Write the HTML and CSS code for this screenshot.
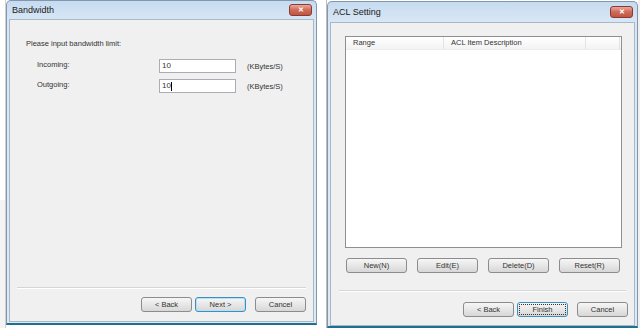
FILE: index.html
```html
<!DOCTYPE html>
<html lang="en">

<head>
    <meta charset="UTF-8">
    <title>Bandwidth / ACL Setting</title>
    <link rel="stylesheet" href="styles.css">
</head>

<body>

    <div class="behind left-edge"></div>

    <!-- Bandwidth wizard page -->
    <div class="win bw">
        <div class="titlebar">
            <span class="title">Bandwidth</span>
            <span class="close">&#x2715;</span>
        </div>
        <div class="client">
            <p class="lead">Please input bandwidth limit:</p>
            <div class="field">
                <label>Incoming:</label>
                <div class="input">10</div>
                <span class="unit">(KBytes/S)</span>
            </div>
            <div class="field">
                <label>Outgoing:</label>
                <div class="input">10<span class="caret"></span></div>
                <span class="unit">(KBytes/S)</span>
            </div>
            <div class="spacer"></div>
            <hr class="sep">
            <div class="nav">
                <button class="btn">&lt; Back</button>
                <button class="btn default">Next &gt;</button>
                <button class="btn cancel">Cancel</button>
            </div>
        </div>
    </div>

    <div class="behind gap"></div>

    <!-- ACL wizard page -->
    <div class="win acl">
        <div class="titlebar">
            <span class="title">ACL Setting</span>
            <span class="close">&#x2715;</span>
        </div>
        <div class="client">
            <div class="list">
                <div class="list-head">
                    <span class="col range">Range</span>
                    <span class="col desc">ACL Item Description</span>
                    <span class="col rest"></span>
                </div>
            </div>
            <div class="actions">
                <button class="btn">New(N)</button>
                <button class="btn">Edit(E)</button>
                <button class="btn">Delete(D)</button>
                <button class="btn">Reset(R)</button>
            </div>
            <hr class="sep">
            <div class="nav">
                <button class="btn">&lt; Back</button>
                <button class="btn focus">Finish</button>
                <button class="btn cancel">Cancel</button>
            </div>
        </div>
    </div>

    <div class="behind right-edge"></div>

</body>

</html>
```

FILE: styles.css
```css
html,
body {
    margin: 0;
    padding: 0;
    width: 640px;
    height: 328px;
    overflow: hidden;
    background: #fff;
    font-family: 'Liberation Sans', Arial, sans-serif;
    font-size: 8px;
    color: #333;
}

body {
    display: flex;
    align-items: flex-start;
}

/* Desktop bits showing between the dialogs */

.behind {
    height: 328px;
    flex: none;
}

.left-edge {
    width: 5px;
    background: linear-gradient(#fff 0, #fff 200px, #f4f4f4 200px);
    border-right: 1px solid #d0d0d0;
}

.gap {
    width: 9px;
    border-right: 1px solid #bdbdbd;
    background: #fff;
}

.right-edge {
    width: 3px;
    background: #f0f0f0;
}

/* Window frame */

.win {
    flex: none;
    display: flex;
    flex-direction: column;
    box-sizing: border-box;
    background: linear-gradient(#c6dbf0, #d9e7f5 20px, #dde9f5);
    border: 1px solid #8297ad;
    border-radius: 5px 5px 0 0;
    border-bottom: 2px solid #1f6f8f;
    padding: 0 2px 1px;
}

.bw {
    width: 311px;
    height: 325px;
}

.acl {
    width: 311px;
    height: 327px;
    margin-top: 1px;
}

.titlebar {
    height: 18px;
    display: flex;
    align-items: center;
    justify-content: space-between;
    padding: 0 2px 0 3px;
    flex: none;
}

.acl .titlebar {
    height: 20px;
}

.title {
    font-size: 9px;
    color: #1a1a1a;
}

.close {
    width: 21px;
    height: 10px;
    border: 1px solid #8a3a30;
    border-radius: 3px;
    background: linear-gradient(#e8a89c, #cf6a58 50%, #c05640);
    color: #fff;
    font-size: 7px;
    font-weight: bold;
    line-height: 10px;
    text-align: center;
}

.client {
    flex: 1;
    background: #f0f0f0;
    border: 1px solid #a9b8c8;
    display: flex;
    flex-direction: column;
}

/* Bandwidth page */

.bw .client {
    padding: 19px 7px 9px 7px;
}

.lead {
    margin: 0 0 11px 9px;
    font-size: 7.5px;
}

.field {
    display: flex;
    align-items: center;
    height: 14px;
    margin: 0 0 6px 20px;
}

.field label {
    width: 122px;
    font-size: 7.5px;
    margin-top: -4px;
}

.input {
    width: 73px;
    height: 12px;
    background: #fff;
    border: 1px solid #abadb3;
    padding-left: 2px;
    font-size: 8px;
    line-height: 12px;
    display: flex;
    align-items: center;
}

.caret {
    width: 1px;
    height: 9px;
    background: #000;
}

.unit {
    margin-left: 11px;
    font-size: 7.5px;
}

.spacer {
    flex: 1;
}

.sep {
    margin: 0;
    border: 0;
    border-top: 1px solid #d5d5d5;
    border-bottom: 1px solid #fff;
}

.nav {
    display: flex;
    justify-content: flex-end;
    gap: 3px;
    margin-top: 8px;
}

.btn {
    width: 51px;
    height: 15px;
    padding: 0;
    box-sizing: border-box;
    border: 1px solid #8c8c8c;
    border-radius: 3px;
    background: linear-gradient(#f6f6f6, #e7e7e7 50%, #d7d7d7);
    font-family: inherit;
    font-size: 7.5px;
    color: #333;
}

.btn.cancel {
    margin-left: 6px;
}

.btn.default {
    border-color: #3c8fbf;
    box-shadow: inset 0 0 0 1px #b5e0f5;
}

.btn.focus {
    border-color: #3c8fbf;
    outline: 1px dotted #333;
    outline-offset: -3px;
}

/* ACL page */

.acl .client {
    padding: 13px 6px 8px 8px;
}

.list {
    height: 210px;
    margin: 0 6px 0 6px;
    background: #fff;
    border: 1px solid #8f8f8f;
}

.list-head {
    display: flex;
    height: 12px;
    background: linear-gradient(#fff, #f3f3f3);
    border-bottom: 1px solid #ececec;
}

.col {
    font-size: 7.5px;
    line-height: 12px;
    padding-left: 7px;
    border-right: 1px solid #e3e3e3;
    box-sizing: border-box;
}

.range {
    width: 98px;
}

.desc {
    width: 142px;
}

.rest {
    width: 34px;
}

.actions {
    display: flex;
    justify-content: space-between;
    margin: 10px 8px 0 7px;
}

.actions .btn {
    width: 61px;
}

.acl .sep {
    margin: 17px 2px 0 0;
}

.acl .nav {
    margin-top: 10px;
}
```
